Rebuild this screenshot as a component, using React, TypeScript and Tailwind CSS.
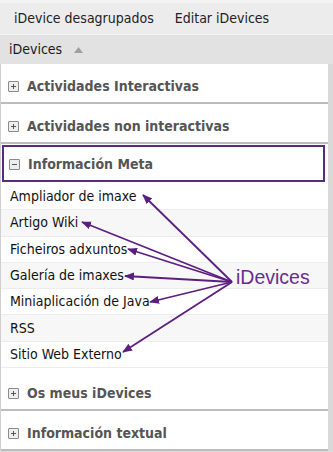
import React from "react";

const FONT = { fontFamily: '"DejaVu Sans Condensed", "DejaVu Sans", Verdana, sans-serif' };

function PlusBox({ minus = false }: { minus?: boolean }) {
  return (
    <span className="relative inline-block w-[11px] h-[11px] border border-[#8a8a8a] bg-[#eeeeee] rounded-[1px] shrink-0">
      <span className="absolute left-[2px] top-[4px] w-[5px] h-[1px] bg-[#555]" />
      {!minus && <span className="absolute left-[4px] top-[2px] w-[1px] h-[5px] bg-[#555]" />}
    </span>
  );
}

function Category({ label }: { label: string }) {
  return (
    <div className="h-[40px] border-b-2 border-[#bcbcbc] bg-white flex items-center gap-[8px] pl-[7px] pt-[6px]">
      <PlusBox />
      <span className="text-[14px] font-bold text-[#555555]">{label}</span>
    </div>
  );
}

const items = [
  "Ampliador de imaxe",
  "Artigo Wiki",
  "Ficheiros adxuntos",
  "Galería de imaxes",
  "Miniaplicación de Java",
  "RSS",
  "Sitio Web Externo",
];

const ORIGIN = { x: 232, y: 282 };
const tips = [
  { x: 143, y: 195 },
  { x: 82, y: 222 },
  { x: 128, y: 249 },
  { x: 125, y: 276 },
  { x: 150, y: 302 },
  { x: 123, y: 352 },
];

export default function App() {
  return (
    <div className="relative w-[333px] h-[452px] bg-[#dcdcdc] overflow-hidden" style={FONT}>
      {/* Tabs */}
      <div className="h-[34px] bg-[#ececec] border-t-[3px] border-[#f3f3f3] flex items-center text-[14px] text-[#222]">
        <span className="pl-[14px]">iDevice desagrupados</span>
        <span className="pl-[21px]">Editar iDevices</span>
      </div>
      {/* Header */}
      <div className="h-[30px] bg-[#e2e2e2] border-t border-[#f4f4f4] flex items-center pl-[9px] text-[14px] text-[#1a1a1a]">
        <span>iDevices</span>
        <svg width="9" height="6" viewBox="0 0 9 6" className="ml-[12px]">
          <polygon points="4.5,0 9,6 0,6" fill="#a0a0a0" />
        </svg>
      </div>
      {/* Content */}
      <div className="flex">
        <div className="w-[328px] bg-white border-l border-[#cfcfcf] flex flex-col">
          <Category label="Actividades Interactivas" />
          <Category label="Actividades non interactivas" />
          <div className="h-[37px] mt-[1px] ml-[1px] mr-[3px] border-2 border-[#5a2a7e] flex items-center gap-[8px] pl-[5px] pt-[2px]">
            <PlusBox minus />
            <span className="text-[14px] font-bold text-[#555555]">Información Meta</span>
          </div>
          <div className="flex flex-col pt-[2px]">
            {items.map((t, i) => (
              <div
                key={t}
                className={`h-[26.3px] flex items-center pl-[9px] text-[14px] text-[#111] border-b border-[#ededed] ${
                  i % 2 === 1 ? "bg-[#f7f7f7]" : "bg-white"
                }`}
              >
                {t}
              </div>
            ))}
          </div>
          <div className="h-[3px]" />
          <Category label="Os meus iDevices" />
          <Category label="Información textual" />
        </div>
        <div className="w-[5px] bg-[#d9d9d9]" />
      </div>

      {/* Annotation overlay */}
      <svg className="absolute left-0 top-0 pointer-events-none" width="333" height="452" viewBox="0 0 333 452">
        <defs>
          <marker id="ah" markerWidth="10" markerHeight="8" refX="9" refY="4" orient="auto" markerUnits="userSpaceOnUse">
            <polygon points="0,0 10,4 0,8" fill="#5c1f80" />
          </marker>
        </defs>
        {tips.map((t, i) => (
          <line
            key={i}
            x1={ORIGIN.x}
            y1={ORIGIN.y}
            x2={t.x}
            y2={t.y}
            stroke="#5c1f80"
            strokeWidth="1.8"
            markerEnd="url(#ah)"
          />
        ))}
      </svg>
      <span
        className="absolute left-[236px] top-[268px] text-[19.5px] leading-none text-[#6a2c92]"
        style={{ fontFamily: '"Liberation Sans", Arial, sans-serif' }}
      >
        iDevices
      </span>
    </div>
  );
}
